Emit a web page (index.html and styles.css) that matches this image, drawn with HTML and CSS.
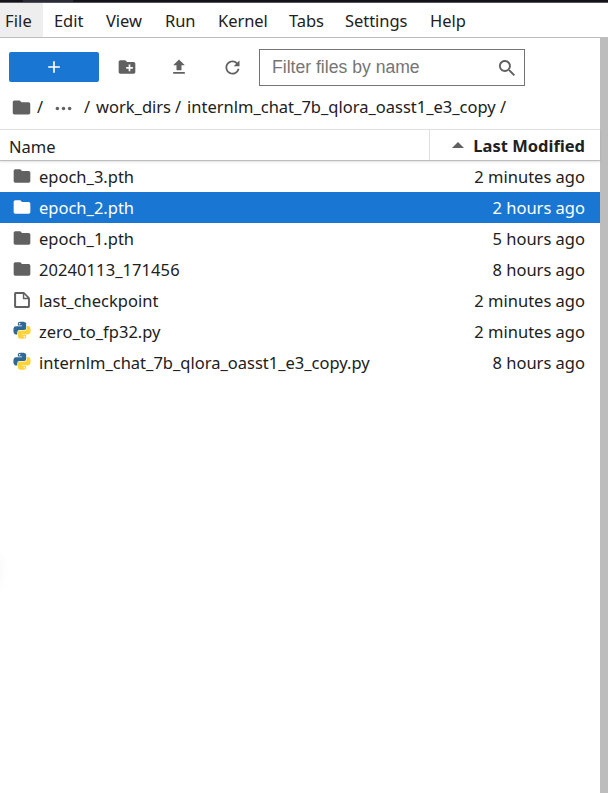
FILE: index.html
```html
<!DOCTYPE html>
<html lang="en">
<head>
<meta charset="utf-8">
<title>File Browser</title>
<link rel="stylesheet" href="styles.css">
</head>
<body>
<svg class="defs" aria-hidden="true">
  <symbol id="folder" viewBox="0 0 24 24"><path d="M10 4H4c-1.1 0-1.99.9-1.99 2L2 18c0 1.1.9 2 2 2h16c1.1 0 2-.9 2-2V8c0-1.1-.9-2-2-2h-8l-2-2z"/></symbol>
  <symbol id="file" viewBox="0 0 22 22"><path d="M19.3 8.2l-5.5-5.5c-.3-.3-.7-.5-1.2-.5H3.9c-.8.1-1.6.9-1.6 1.8v14.1c0 .9.7 1.6 1.6 1.6h14.2c.9 0 1.6-.7 1.6-1.6V9.4c.1-.5-.1-.9-.4-1.2zm-5.8-3.3l3.4 3.6h-3.4V4.9zm3.9 12.7H4.7c-.1 0-.2 0-.2-.2V4.7c0-.2.1-.3.2-.3h7.2v4.4s0 .8.3 1.1c.3.3 1.1.3 1.1.3h4.3v7.2s-.1.2-.2.2z"/></symbol>
  <path id="snake" d="M14.25.18l.9.2.73.26.59.3.45.32.34.34.25.34.16.33.1.3.04.26.02.2-.01.13V8.5l-.05.63-.13.55-.21.46-.26.38-.3.31-.33.25-.35.19-.35.14-.33.1-.3.07-.26.04-.21.02H8.77l-.69.05-.59.14-.5.22-.41.27-.33.32-.27.35-.2.36-.15.37-.1.35-.07.32-.04.27-.02.21v3.06H3.17l-.21-.03-.28-.07-.32-.12-.35-.18-.36-.26-.36-.36-.35-.46-.32-.59-.28-.73-.21-.88-.14-1.05-.05-1.23.06-1.22.16-1.04.24-.87.32-.71.36-.57.4-.44.42-.33.42-.24.4-.16.36-.1.32-.05.24-.01h.16l.06.01h8.16v-.83H6.18l-.01-2.75-.02-.37.05-.34.11-.31.17-.28.25-.26.31-.23.38-.2.44-.18.51-.15.58-.12.64-.1.71-.06.77-.04.84-.02 1.27.05zm-6.3 1.98l-.23.33-.08.41.08.41.23.34.33.22.41.09.41-.09.33-.22.23-.34.08-.41-.08-.41-.23-.33-.33-.22-.41-.09-.41.09z"/>
  <symbol id="python" viewBox="-2 -1 28 28"><use href="#snake" fill="#306998"/><use href="#snake" fill="#ffd43b" transform="rotate(180 12 12)"/></symbol>
</svg>
<div class="topstrip"><div class="tab"></div></div>
<nav class="menubar">
  <span class="active">File</span><span>Edit</span><span>View</span><span>Run</span><span>Kernel</span><span>Tabs</span><span>Settings</span><span>Help</span>
</nav>
<div class="shell">
  <main class="browser">
    <div class="toolbar">
      <button class="new" aria-label="New"><svg viewBox="0 0 24 24" width="20" height="20"><path d="M19 13h-6v6h-2v-6H5v-2h6V5h2v6h6v2z"/></svg></button>
      <div class="tool"><svg viewBox="0 0 24 24" width="20" height="20"><path d="M20 6h-8l-2-2H4c-1.11 0-1.99.89-1.99 2L2 18c0 1.11.89 2 2 2h16c1.11 0 2-.89 2-2V8c0-1.11-.89-2-2-2zm-1 8h-3v3h-2v-3h-3v-2h3V9h2v3h3v2z"/></svg></div>
      <div class="tool"><svg viewBox="0 0 24 24" width="20" height="20"><path d="M9 16h6v-6h4l-7-7-7 7h4zm-4 2h14v2H5z"/></svg></div>
      <div class="tool refresh"><svg viewBox="0 0 18 18" width="21" height="21"><path d="M9 13.5c-2.49 0-4.5-2.01-4.5-4.5S6.51 4.5 9 4.5c1.24 0 2.36.52 3.17 1.33L10 8h5V3l-1.76 1.76C12.15 3.68 10.66 3 9 3 5.69 3 3.01 5.69 3.01 9S5.69 15 9 15c2.97 0 5.43-2.16 5.9-5h-1.52c-.46 2-2.24 3.5-4.38 3.5z"/></svg></div>
      <div class="filter"><span>Filter files by name</span><svg viewBox="0 0 18 18" width="20" height="20"><path d="M12.1,10.9h-0.7l-0.2-0.2c0.8-0.9,1.3-2.2,1.3-3.5c0-3-2.4-5.4-5.4-5.4S1.8,4.2,1.8,7.1s2.4,5.4,5.4,5.4c1.3,0,2.5-0.5,3.5-1.3l0.2,0.2v0.7l4.1,4.1l1.2-1.2L12.1,10.9z M7.1,10.9c-2.1,0-3.7-1.7-3.7-3.7s1.7-3.7,3.7-3.7s3.7,1.7,3.7,3.7S9.2,10.9,7.1,10.9z"/></svg></div>
    </div>
    <div class="crumbs">
      <svg class="home"><use href="#folder"/></svg><span class="s1">/</span>
      <svg class="dots" viewBox="0 0 24 24"><circle cx="5" cy="12" r="2"/><circle cx="12" cy="12" r="2"/><circle cx="19" cy="12" r="2"/></svg>
      <span class="s2">/</span><span class="dir">work_dirs</span><span class="s3">/</span><span class="path">internlm_chat_7b_qlora_oasst1_e3_copy</span><span>/</span>
    </div>
    <div class="head"><div class="name">Name</div><div class="modified"><svg viewBox="0 0 12 6" width="12" height="6"><path d="M0 6L6 0l6 6z"/></svg><span>Last Modified</span></div></div>
    <div class="list">
      <div class="row"><svg><use href="#folder"/></svg><span class="label">epoch_3.pth</span><span>2 minutes ago</span></div>
      <div class="row selected"><svg><use href="#folder"/></svg><span class="label">epoch_2.pth</span><span>2 hours ago</span></div>
      <div class="row"><svg><use href="#folder"/></svg><span class="label">epoch_1.pth</span><span>5 hours ago</span></div>
      <div class="row"><svg><use href="#folder"/></svg><span class="label digits">20240113_171456</span><span>8 hours ago</span></div>
      <div class="row"><svg><use href="#file"/></svg><span class="label">last_checkpoint</span><span>2 minutes ago</span></div>
      <div class="row"><svg><use href="#python"/></svg><span class="label">zero_to_fp32.py</span><span>2 minutes ago</span></div>
      <div class="row"><svg><use href="#python"/></svg><span class="label">internlm_chat_7b_qlora_oasst1_e3_copy.py</span><span>8 hours ago</span></div>
    </div>
    <div class="glow"></div>
  </main>
  <div class="splitter"></div>
</div>
</body>
</html>
```
FILE: styles.css
```css
* { box-sizing: border-box; }
body {
  margin: 0; height: 793px; overflow: hidden; display: flex; flex-direction: column;
  background: #fff; color: #212121;
  font: 16.5px/24px "Noto Sans", "Open Sans", sans-serif;
}
svg { fill: #616161; flex: none; display: block; }
.defs { position: absolute; width: 0; height: 0; }
.topstrip { height: 3px; background: #15131a; border-bottom: 1px solid #57575b; padding-left: 23px; flex: none; }
.tab { width: 50px; height: 2px; background: #2b2b38; }
.menubar {
  height: 35px; flex: none; border-bottom: 1px solid #bdbdbd; line-height: 36px;
  display: grid; grid-template-columns: 43px 52px 59px 53px 71px 56px 85px 100px;
  grid-template-rows: 34px;
}
.menubar span { padding-left: 11px; white-space: nowrap; letter-spacing: -.05px; }
.menubar .active { background: #eee; padding-left: 5px; letter-spacing: .1px; }
.shell { flex: 1; display: flex; min-height: 0; }
.browser { flex: 1; min-width: 0; display: flex; flex-direction: column; position: relative; }
.splitter { width: 8px; background: #bdbdbd; }
.toolbar { height: 52px; display: flex; align-items: center; padding: 6px 0 0 9px; }
.new { width: 90px; height: 30px; border: 0; border-radius: 2px; background: #1976d2; padding: 0; display: grid; place-items: center; margin-right: 2px; }
.new svg { fill: #fff; }
.tool { width: 52px; display: grid; place-items: center; }
.refresh { padding-left: 2px; }
.filter {
  width: 266px; height: 37px; margin-left: 2px; border: 1px solid #757575; padding: 0 7px 0 12px;
  display: flex; align-items: center; justify-content: space-between;
  font: 17.6px/34px "Liberation Sans", Arial, sans-serif; color: #757575;
}
.filter svg { margin-top: 2px; }
.crumbs { height: 39px; display: flex; align-items: center; padding: 0 0 5px 11px; white-space: nowrap; }
.crumbs svg { width: 21px; height: 21px; margin-top: 1px; }
.s1 { width: 15px; margin-left: 5px; }
.crumbs .dots { width: 21px; margin-left: 1px; margin-top: 3px; }
.s2 { width: 12px; margin-left: 10px; }
.dir { width: 79px; }
.s3 { width: 12px; }
.path { width: 313px; }
.head { height: 32px; border-top: 1px solid #e0e0e0; border-bottom: 1px solid #bdbdbd; display: flex; line-height: 34px; box-shadow: 0 1px 2px rgba(0,0,0,.12); z-index: 1; }
.name { flex: 1; padding-left: 9px; }
.modified { width: 171px; border-left: 1px solid #e0e0e0; padding: 1px 15px 0 22px; display: flex; align-items: center; justify-content: space-between; font-weight: 700; }
.modified svg { margin-bottom: 2px; }
.row { height: 31px; display: flex; align-items: center; padding: 0 15px 0 12px; line-height: 31px; white-space: nowrap; }
.row svg { width: 20px; height: 20px; margin: 0 7px 2px 0; }
.label { margin-right: auto; }
.digits { letter-spacing: .08px; }
.selected { background: #1976d2; color: #fff; }
.selected svg { fill: #fff; }
.glow { position: absolute; left: -53px; top: 507px; width: 50px; height: 50px; border-radius: 50%; box-shadow: 0 0 16px rgba(0,0,0,.07); }
```
